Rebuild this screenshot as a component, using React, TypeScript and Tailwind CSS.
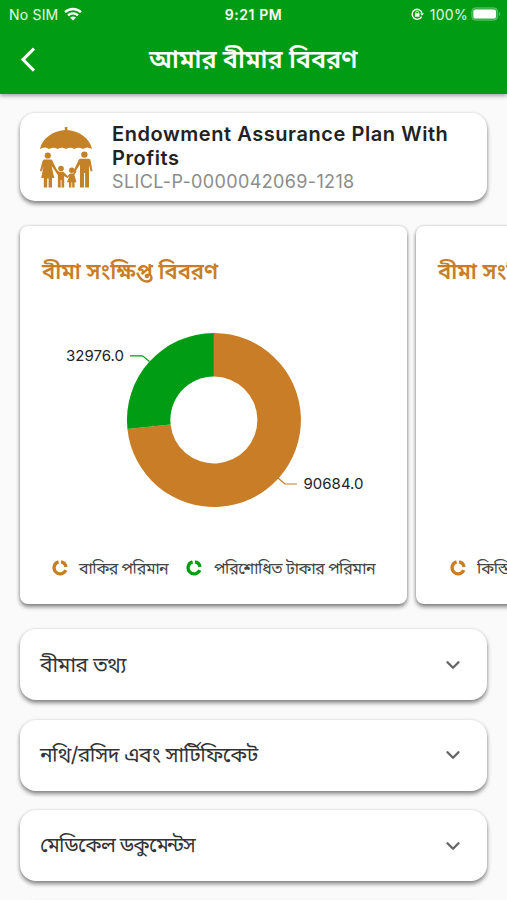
import React from 'react';
import { ChevronDown } from 'lucide-react';

const sections = [
    { label: 'বীমার তথ্য', fit: 'w-[87px] text-[21px] tracking-[-0.5px]' },
    { label: 'নথি/রসিদ এবং সার্টিফিকেট', fit: 'w-[218px] text-[21px] tracking-[-0.55px]' },
    { label: 'মেডিকেল ডকুমেন্টস', fit: 'w-[156px] text-[20.4px] tracking-[-0.9px]' },
];

const StatusBar: React.FC = () => (
    <div className="relative flex h-7 items-center justify-between pl-[9px] pr-[6px] text-[14px] text-white">
        <div className="flex items-center gap-[6px]">
            <span className="tracking-[0.2px] text-white/90">No SIM</span>
            <svg width="18" height="14" viewBox="0 0 18 14" fill="none" stroke="currentColor" strokeWidth="2.3">
                <path d="M1 5.2 C5.5 .9 12.5 .9 17 5.2" />
                <path d="M4 8.3 C6.8 5.7 11.2 5.7 14 8.3" />
                <path d="M9 13.6 L6 10.6 C7.7 9.1 10.3 9.1 12 10.6 Z" fill="currentColor" stroke="none" />
            </svg>
        </div>
        <span className="absolute left-1/2 -translate-x-1/2 font-semibold tracking-[0.6px]">9:21 PM</span>
        <div className="flex items-center">
            <svg className="mr-[6px]" width="13" height="12" viewBox="0 0 13 12" fill="none" stroke="currentColor">
                <path d="M10.6 8.6 A5 5 0 1 1 10.9 4.7" strokeWidth="1.3" />
                <path d="M9 5.2 H13 L11 7.8 Z" fill="currentColor" stroke="none" />
                <rect x="3.9" y="5.2" width="4.6" height="3.5" rx=".5" fill="currentColor" stroke="none" />
                <path d="M4.8 5.5 V4.5 a1.4 1.4 0 0 1 2.8 0 V5.5" strokeWidth=".9" />
            </svg>
            <span className="mr-[3px] tracking-[0.3px] text-white/90">100%</span>
            <svg width="30" height="14" viewBox="0 0 30 14">
                <rect x=".7" y=".7" width="26" height="12.6" rx="3.8" fill="white" fillOpacity=".2" stroke="white" strokeOpacity=".25" />
                <rect x="2.4" y="2.4" width="22.6" height="9.2" rx="2.2" fill="white" />
                <path d="M28 4.8 Q30 7 28 9.2 Z" fill="white" fillOpacity=".4" />
            </svg>
        </div>
    </div>
);

const FamilyIcon: React.FC = () => (
    <svg className="shrink-0 text-[#c48228]" width="56" height="64" viewBox="0 0 56 64" fill="currentColor">
        <path d="M26.8 2 h2.6 v3 C42 6 52 14 54 24 Q49 21 45 24 Q40 21.5 36.5 24 Q32 21.5 28 24 Q24 21.5 19.5 24 Q16 21.5 11 24 Q7 21 2 24 C4 14 14 6 26.8 5 Z" />
        {/* mother */}
        <circle cx="9.8" cy="30.5" r="3.1" />
        <path d="M6.2 34.5 H13.4 Q14.6 35 15 37 L19 45 L17.3 46.2 L13.6 41 L16.3 53 H14 V62.5 H10.6 V53.5 H9.2 V62.5 H5.8 V53 H3.2 L5.6 41 L3.8 46.5 L2 45.8 L4.4 36.5 Q4.8 34.8 6.2 34.5 Z" />
        {/* father */}
        <circle cx="46.4" cy="29.6" r="3.2" />
        <path d="M42.2 33.7 H50.7 Q52.3 33.7 52.7 36 L54.5 46 L52.6 46.6 L51 40 V62.5 H47.1 V48 H46 V62.5 H42 V39.5 L37 47 L35.5 46 L40.4 35.4 Q41 33.7 42.2 33.7 Z" />
        {/* children */}
        <circle cx="23" cy="43.5" r="2.8" />
        <path d="M18.6 44.5 L21 46.8 H25.4 L30.2 51.6 L29.2 53 L26.2 51 V62.5 H23.5 V55 H22.7 V62.5 H19.9 V50 L17.3 46.5 Z" />
        <circle cx="33.8" cy="45.2" r="2.7" />
        <path d="M37.4 44.8 L38.5 46.4 L36.4 50 L38.5 57.2 H36.6 V62.5 H34.2 V57.5 H33.4 V62.5 H31 V57.2 H28.9 L31.4 51 L29.5 53 L28.5 52 L32 48.6 H35.2 Z" />
    </svg>
);

const LegendRing: React.FC<{ className: string }> = ({ className }) => (
    <svg className={className} width="16" height="16" viewBox="0 0 16 16" fill="none" stroke="currentColor" strokeWidth="3.3">
        <path d="M6.6 1.9 A6.1 6.1 0 1 0 13.8 10.2" />
        <path d="M9 1.8 A6.1 6.1 0 0 1 14 6.9" />
    </svg>
);

const BanglaText: React.FC<{ className: string; children: string }> = ({ className, children }) => (
    <span className={`block shrink-0 whitespace-nowrap ${className}`}>{children}</span>
);

const App: React.FC = () => {
    return (
        <div className="h-[900px] w-full overflow-hidden bg-[#fafafa] font-['Inter','Noto_Sans_Bengali','Noto_Sans',sans-serif] text-[#222]">
            <header className="relative h-[94px] bg-[#009d14] shadow-[0_2px_4px_rgba(0,0,0,0.35)]">
                <StatusBar />
                <div className="flex h-[64px] items-center justify-center">
                    <svg className="absolute left-[20px] top-[47px] text-white" width="16" height="25" viewBox="0 0 16 25" fill="none" stroke="currentColor" strokeWidth="3">
                        <path d="M14 1.6 L3 12.6 L14 23.6" />
                    </svg>
                    <h1><BanglaText className="w-[209px] text-[25.2px] font-semibold text-white">আমার বীমার বিবরণ</BanglaText></h1>
                </div>
            </header>

            <main className="pt-[19px]">
                <div className="mx-5 flex h-[88px] items-center rounded-[15px] bg-white pl-[18px] shadow-[0_3px_4px_rgba(0,0,0,0.45),0_0_3px_rgba(0,0,0,0.12)]">
                    <FamilyIcon />
                    <div className="ml-[18px]">
                        <h2 className="w-[350px] text-[20px] font-semibold leading-[24.5px] tracking-[0.56px]">Endowment Assurance Plan With Profits</h2>
                        <p className="text-[18px] leading-[22px] tracking-[0.36px] text-[#8c8c8c]">SLICL-P-0000042069-1218</p>
                    </div>
                </div>

                <div className="mt-[25px] flex gap-[9px] pl-5">
                    <div className="h-[378px] w-[387px] shrink-0 rounded-[8px] bg-white shadow-[0_3px_4px_rgba(0,0,0,0.45),0_0_3px_rgba(0,0,0,0.2)]">
                        <div className="flex h-[88px] items-center pl-[22px] pt-[2px]">
                            <BanglaText className="w-[177px] text-[22px] font-semibold text-[#c87d26]">বীমা সংক্ষিপ্ত বিবরণ</BanglaText>
                        </div>
                        <svg width="387" height="220" viewBox="20 314 387 220" className="block">
                            <path d="M213.9 333 A87 87 0 1 1 127.4 429.1 L170.6 424.5 A43.5 43.5 0 1 0 213.9 376.5 Z" fill="#c87d26" />
                            <path d="M213.9 333 A87 87 0 0 0 127.4 429.1 L170.6 424.5 A43.5 43.5 0 0 1 213.9 376.5 Z" fill="#009d14" />
                            <path d="M130 355.8 H142.5 L149.5 361.5" fill="none" stroke="#009d14" strokeWidth="1.2" />
                            <path d="M297 484 H285 L278 478" fill="none" stroke="#c87d26" strokeWidth="1.2" />
                            <text x="66" y="361" fontSize="15" fill="#222" textLength="58">32976.0</text>
                            <text x="303.5" y="489" fontSize="15" fill="#222" textLength="60">90684.0</text>
                        </svg>
                        <div className="flex h-[67px] items-center pl-[32px]">
                            <LegendRing className="mr-[11px] text-[#c87d26]" />
                            <BanglaText className="w-[89px] text-[16px] tracking-[-0.6px] text-[#444]">বাকির পরিমান</BanglaText>
                            <LegendRing className="ml-[18px] mr-[12px] text-[#009d14]" />
                            <BanglaText className="w-[162px] text-[16px] tracking-[-0.52px] text-[#444]">পরিশোধিত টাকার পরিমান</BanglaText>
                        </div>
                    </div>
                    <div className="h-[378px] w-[387px] shrink-0 rounded-[8px] bg-white shadow-[0_3px_4px_rgba(0,0,0,0.45),0_0_3px_rgba(0,0,0,0.2)]">
                        <div className="flex h-[88px] items-center pl-[22px] pt-[2px]">
                            <BanglaText className="w-[177px] text-[22px] font-semibold text-[#c87d26]">বীমা সংক্ষিপ্ত বিবরণ</BanglaText>
                        </div>
                        <div className="mt-[220px] flex h-[67px] items-center pl-[34px]">
                            <LegendRing className="mr-[11px] text-[#c87d26]" />
                            <BanglaText className="w-[89px] text-[16px] tracking-[-0.4px] text-[#444]">কিস্তি</BanglaText>
                        </div>
                    </div>
                </div>

                <div className="mx-5 mt-[25px] flex flex-col gap-[19.5px]">
                    {sections.map((section) => (
                        <button key={section.label} className="flex h-[71px] items-center justify-between rounded-[16px] bg-white pl-[20px] pr-[23px] text-left shadow-[0_3px_4px_rgba(0,0,0,0.45),0_0_3px_rgba(0,0,0,0.12)]">
                            <BanglaText className={`text-[#333] ${section.fit}`}>{section.label}</BanglaText>
                            <ChevronDown size={22} strokeWidth={2.6} className="text-[#666]" />
                        </button>
                    ))}
                    <div className="h-[71px] rounded-[16px] bg-white shadow-[0_0_3px_rgba(0,0,0,0.12)]" />
                </div>
            </main>
        </div>
    );
};

export default App;
